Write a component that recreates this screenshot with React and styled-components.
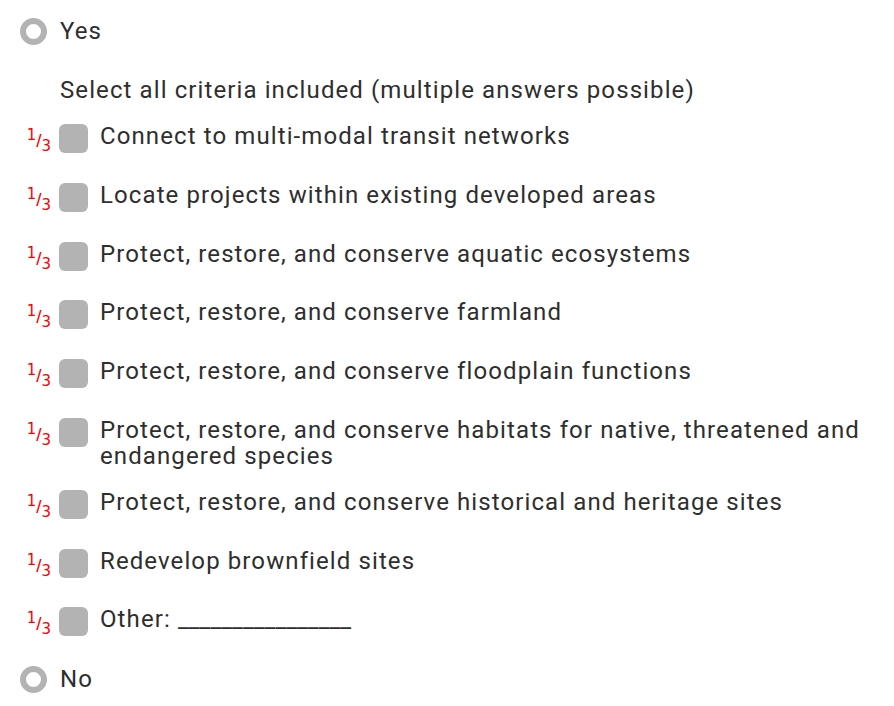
import React from 'react';
import styled, { createGlobalStyle } from 'styled-components';

const GlobalStyle = createGlobalStyle`
  body {
    margin: 0;
    background: #ffffff;
    font-family: Roboto, 'Liberation Sans', sans-serif;
    color: #2e2e2e;
  }
`;

const Page = styled.div`
  padding: 17px 0 0 20px;
`;

const Text = styled.span`
  font-size: 24px;
  line-height: 26px;
  letter-spacing: 1.1px;
`;

const RadioRow = styled.div`
  display: flex;
  align-items: center;
  height: 28px;
  margin-bottom: ${p => p.$gap || 0}px;
`;

const RadioCircle = styled.span`
  box-sizing: border-box;
  width: 27px;
  height: 27px;
  border-radius: 50%;
  border: 6px solid #b3b3b3;
  background: #fff;
  flex-shrink: 0;
`;

const RadioLabel = styled(Text)`
  margin-left: 13px;
`;

const SubBlock = styled.div`
  margin-bottom: 9px;
`;

const Prompt = styled(Text)`
  display: block;
  padding-left: 40px;
  margin-bottom: 20px;
`;

const CheckRow = styled.div`
  display: flex;
  align-items: flex-start;
  min-height: 39px;
  margin-bottom: 19.8px;
`;

const Fraction = styled.span`
  box-sizing: border-box;
  width: 39px;
  height: 30px;
  flex-shrink: 0;
  display: flex;
  align-items: flex-start;
  justify-content: flex-end;
  padding-right: 8px;
  margin-top: 4px;
  color: #ff0000;
  font-family: 'DejaVu Sans', sans-serif;
  font-size: 15px;
  line-height: 12px;
`;

const Num = styled.span`
  margin-top: 2px;
`;

const Slash = styled.span`
  margin-top: 4px;
  font-family: 'Liberation Sans', sans-serif;
  font-size: 19px;
  line-height: 19px;
`;

const Den = styled.span`
  margin-top: 13px;
`;

const Box = styled.span`
  width: 29px;
  height: 29px;
  border-radius: 6px;
  background: #b3b3b3;
  flex-shrink: 0;
  margin-top: 1px;
`;

const Label = styled(Text)`
  margin-left: 12px;
  padding-right: 20px;
`;

const Blank = styled.span`
  letter-spacing: 0;
`;

const criteria = [
  'Connect to multi-modal transit networks',
  'Locate projects within existing developed areas',
  'Protect, restore, and conserve aquatic ecosystems',
  'Protect, restore, and conserve farmland',
  'Protect, restore, and conserve floodplain functions',
  'Protect, restore, and conserve habitats for native, threatened and endangered species',
  'Protect, restore, and conserve historical and heritage sites',
  'Redevelop brownfield sites',
];

function ThirdMark() {
  return (
    <Fraction>
      <Num>1</Num>
      <Slash>/</Slash>
      <Den>3</Den>
    </Fraction>
  );
}

export default function App() {
  return (
    <>
      <GlobalStyle />
      <Page>
        <RadioRow $gap={32}>
          <RadioCircle />
          <RadioLabel>Yes</RadioLabel>
        </RadioRow>
        <SubBlock>
          <Prompt>Select all criteria included (multiple answers possible)</Prompt>
          {criteria.map(c => (
            <CheckRow key={c}>
              <ThirdMark />
              <Box />
              <Label>{c}</Label>
            </CheckRow>
          ))}
          <CheckRow>
            <ThirdMark />
            <Box />
            <Label>
              Other: <Blank>________________</Blank>
            </Label>
          </CheckRow>
        </SubBlock>
        <RadioRow>
          <RadioCircle />
          <RadioLabel>No</RadioLabel>
        </RadioRow>
      </Page>
    </>
  );
}
